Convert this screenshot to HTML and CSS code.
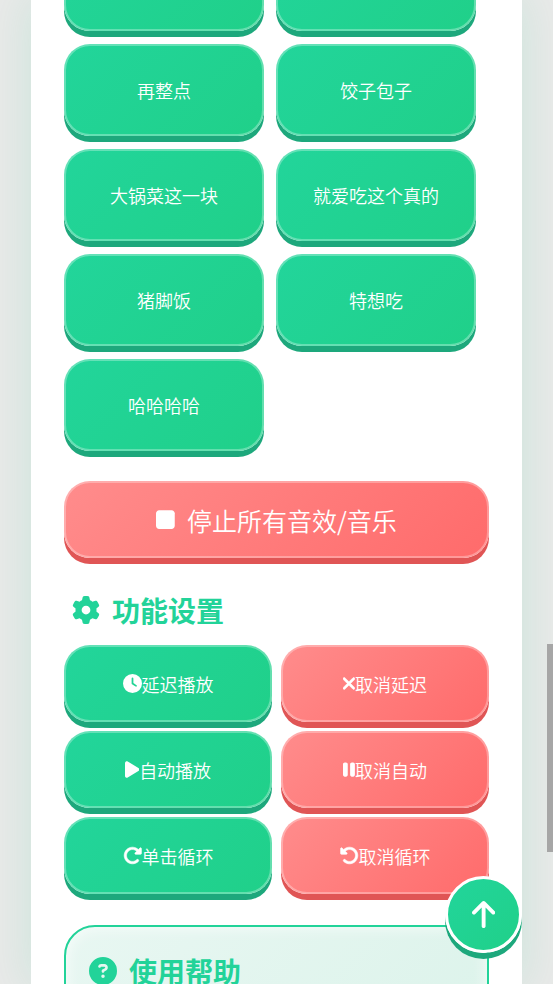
FILE: index.html
```html
<!DOCTYPE html>
<html lang="zh-CN">
<head>
<meta charset="utf-8">
<meta name="viewport" content="width=device-width, initial-scale=1">
<title>音效</title>
<link rel="stylesheet" href="styles.css">
</head>
<body>
<main class="card">
  <section class="sounds">
    <button class="btn sound" aria-label="音效"></button>
    <button class="btn sound" aria-label="音效"></button>
    <button class="btn sound">再整点</button>
    <button class="btn sound">饺子包子</button>
    <button class="btn sound">大锅菜这一块</button>
    <button class="btn sound">就爱吃这个真的</button>
    <button class="btn sound">猪脚饭</button>
    <button class="btn sound">特想吃</button>
    <button class="btn sound">哈哈哈哈</button>
  </section>

  <button class="btn red stop">
    <svg class="icon" viewBox="0 0 384 512"><path d="M0 128C0 92.700 28.700 64 64 64H320c35.300 0 64 28.700 64 64V384c0 35.300-28.700 64-64 64H64c-35.300 0-64-28.700-64-64V128z"/></svg>
    停止所有音效/音乐
  </button>

  <h2 class="heading settings-heading">
    <svg class="icon" viewBox="0 0 512 512"><path d="M495.9 166.6c3.2 8.7 .5 18.4-6.4 24.6l-43.3 39.4c1.1 8.3 1.7 16.8 1.7 25.4s-.6 17.1-1.7 25.4l43.3 39.4c6.9 6.200 9.600 15.900 6.400 24.600c-4.400 11.900-9.700 23.300-15.800 34.300l-4.700 8.100c-6.600 11-14 21.400-22.100 31.200c-5.900 7.200-15.700 9.600-24.500 6.800l-55.700-17.700c-13.400 10.300-28.200 18.900-44 25.400l-12.500 57.100c-2 9.100-9 16.300-18.200 17.800c-13.800 2.300-28 3.500-42.500 3.500s-28.700-1.200-42.500-3.500c-9.200-1.500-16.200-8.700-18.200-17.800l-12.500-57.100c-15.800-6.500-30.600-15.100-44-25.400L83.100 425.900c-8.800 2.800-18.600 .3-24.500-6.800c-8.100-9.800-15.500-20.200-22.100-31.200l-4.700-8.100c-6.100-11-11.400-22.400-15.800-34.300c-3.200-8.700-.5-18.400 6.400-24.600l43.300-39.400C64.600 273.100 64 264.600 64 256s.6-17.100 1.700-25.400L22.400 191.200c-6.900-6.200-9.600-15.900-6.400-24.600c4.400-11.900 9.700-23.300 15.800-34.300l4.700-8.100c6.600-11 14-21.400 22.100-31.200c5.900-7.200 15.700-9.600 24.500-6.800l55.700 17.700c13.400-10.300 28.200-18.900 44-25.400l12.500-57.100c2-9.100 9-16.300 18.200-17.800C227.300 1.200 241.500 0 256 0s28.700 1.200 42.500 3.500c9.200 1.500 16.200 8.700 18.200 17.800l12.500 57.100c15.800 6.500 30.600 15.100 44 25.400l55.700-17.700c8.800-2.800 18.600-.3 24.500 6.800c8.100 9.800 15.500 20.200 22.100 31.200l4.700 8.100c6.100 11 11.400 22.400 15.800 34.300zM256 336a80 80 0 1 0 0-160 80 80 0 1 0 0 160z"/></svg>
    功能设置
  </h2>

  <section class="settings">
    <button class="btn"><svg class="icon" viewBox="0 0 512 512"><path d="M256 0a256 256 0 1 1 0 512A256 256 0 1 1 256 0zM232 120V256c0 8 4 15.500 10.700 20l96 64c11 7.400 25.900 4.400 33.300-6.700s4.400-25.900-6.700-33.300L280 243.200V120c0-13.300-10.700-24-24-24s-24 10.700-24 24z"/></svg>延迟播放</button>
    <button class="btn red"><svg class="icon bold" viewBox="32 0 320 512"><path d="M342.6 150.6c12.5-12.5 12.5-32.8 0-45.3s-32.8-12.5-45.3 0L192 210.7 86.6 105.4c-12.5-12.5-32.8-12.5-45.3 0s-12.5 32.8 0 45.3L146.7 256 41.4 361.4c-12.5 12.5-12.5 32.8 0 45.3s32.8 12.5 45.3 0L192 301.3 297.4 406.6c12.5 12.5 32.8 12.5 45.3 0s12.5-32.8 0-45.3L237.3 256 342.6 150.6z"/></svg>取消延迟</button>
    <button class="btn"><svg class="icon" viewBox="0 0 384 512"><path d="M73 39c-14.8-9.1-33.4-9.4-48.5-.9S0 62.6 0 80V432c0 17.4 9.4 33.4 24.5 41.9s33.7 8.1 48.5-.9L361 297c14.3-8.7 23-24.2 23-41s-8.7-32.2-23-41L73 39z"/></svg>自动播放</button>
    <button class="btn red"><svg class="icon" viewBox="0 0 320 512"><path d="M48 64C21.5 64 0 85.5 0 112V400c0 26.5 21.5 48 48 48H80c26.5 0 48-21.5 48-48V112c0-26.5-21.5-48-48-48H48zm192 0c-26.5 0-48 21.5-48 48V400c0 26.5 21.5 48 48 48h32c26.5 0 48-21.5 48-48V112c0-26.5-21.5-48-48-48H240z"/></svg>取消自动</button>
    <button class="btn"><svg class="icon bold" viewBox="0 0 512 512"><path d="M463.5 224H472c13.3 0 24-10.7 24-24V72c0-9.7-5.8-18.5-14.8-22.2s-19.3-1.7-26.2 5.2L413.4 96.6c-87.6-86.5-228.7-86.2-315.8 1c-87.5 87.5-87.5 229.3 0 316.8s229.3 87.5 316.8 0c12.5-12.5 12.5-32.8 0-45.3s-32.8-12.5-45.3 0c-62.5 62.5-163.8 62.5-226.3 0s-62.5-163.8 0-226.3c62.2-62.2 162.7-62.5 225.3-1L327 183c-6.9 6.9-8.9 17.2-5.2 26.2s12.5 14.8 22.2 14.8H463.5z"/></svg>单击循环</button>
    <button class="btn red"><svg class="icon bold" viewBox="0 0 512 512"><path d="M48.5 224H40c-13.3 0-24-10.7-24-24V72c0-9.7 5.8-18.5 14.8-22.2s19.3-1.7 26.2 5.2L98.6 96.6c87.6-86.5 228.7-86.2 315.8 1c87.5 87.5 87.5 229.3 0 316.8s-229.3 87.5-316.8 0c-12.5-12.5-12.5-32.8 0-45.3s32.8-12.5 45.3 0c62.5 62.5 163.8 62.5 226.3 0s62.5-163.8 0-226.3c-62.2-62.2-162.7-62.5-225.3-1L185 183c6.9 6.9 8.9 17.2 5.2 26.2s-12.5 14.8-22.2 14.8H48.5z"/></svg>取消循环</button>
  </section>

  <section class="help">
    <h2 class="heading">
      <svg class="icon" viewBox="0 0 512 512"><path d="M256 512A256 256 0 1 0 256 0a256 256 0 1 0 0 512zM169.8 165.3c7.9-22.3 29.1-37.3 52.8-37.3h58.3c34.9 0 63.1 28.3 63.1 63.1c0 22.6-12.1 43.5-31.7 54.8L280 264.4c-.2 13-10.9 23.6-24 23.6c-13.3 0-24-10.7-24-24V250.5c0-8.6 4.6-16.5 12.1-20.8l44.3-25.4c4.7-2.7 7.6-7.7 7.6-13.1c0-8.4-6.8-15.1-15.1-15.1H222.6c-3.4 0-6.4 2.1-7.5 5.3l-.4 1.2c-4.4 12.5-18.2 19-30.6 14.6s-19-18.2-14.6-30.6l.4-1.2zM224 352a32 32 0 1 1 64 0 32 32 0 1 1 -64 0z"/></svg>
      使用帮助
    </h2>
  </section>
</main>

<button class="to-top" aria-label="返回顶部">
  <svg class="icon" viewBox="0 0 384 512"><path d="M214.6 41.4c-12.5-12.5-32.8-12.5-45.3 0l-160 160c-12.5 12.5-12.5 32.8 0 45.3s32.8 12.5 45.3 0L160 141.2V448c0 17.7 14.3 32 32 32s32-14.3 32-32V141.2L329.4 246.6c12.5 12.5 32.8 12.5 45.3 0s12.5-32.8 0-45.3l-160-160z"/></svg>
</button>
<div class="scroll-thumb" aria-hidden="true"></div>
</body>
</html>
```
FILE: styles.css
```css
* {
  box-sizing: border-box;
}

body {
  margin: 0;
  height: 100vh;
  overflow: hidden;
  background: #e8e9e8;
  font-family: "Noto Sans CJK SC", sans-serif;
  color: #fff;
}

.card {
  height: 100vh;
  overflow: hidden;
  margin: 0 31px;
  padding: 0 33px;
  background: #fff;
  box-shadow: 0 0 40px rgba(32, 210, 145, 0.15);
}

.icon {
  height: 1em;
  flex: none;
  fill: currentColor;
}

.btn {
  display: flex;
  align-items: center;
  justify-content: center;
  min-height: 77px;
  padding: 0;
  border: 2px solid rgba(255, 255, 255, 0.3);
  border-radius: 26px;
  background: linear-gradient(135deg, #22d59b, #20d089) border-box;
  box-shadow: 0 6px 0 #1da87c;
  color: inherit;
  font-family: inherit;
  font-size: 18px;
  font-weight: 350;
  line-height: 28px;
}

.red {
  background: linear-gradient(135deg, #ff8c8c, #ff6b6b) border-box;
  box-shadow: 0 6px 0 #e05555;
}

/* Scrolled so that the first row is partly above the window */
.sounds {
  display: grid;
  grid-template-columns: 1fr 1fr;
  gap: 13px 12px;
  margin-top: -61px;
  padding-right: 13px;
}

.sound {
  min-height: 92px;
}

.stop {
  width: 100%;
  margin-top: 30px;
  gap: 12px;
  font-size: 25px;
}

.heading {
  display: flex;
  align-items: center;
  gap: 12px;
  margin: 0;
  color: #22d399;
  font-size: 28px;
  font-weight: 700;
  line-height: 38px;
}

.settings-heading {
  margin: 33px 0 16px;
  padding-left: 8px;
}

.settings {
  display: grid;
  grid-template-columns: 1fr 1fr;
  gap: 9px;
}

.settings .icon {
  height: 19px;
}

.bold {
  stroke: currentColor;
  stroke-width: 16px;
}

.help {
  height: 300px;
  margin-top: 31px;
  padding: 25px 23px;
  border: 2px solid #22d399;
  border-radius: 31px;
  background: linear-gradient(135deg, #e8f7f2, #d8f2e8);
  box-shadow: inset 0 0 16px rgba(255, 255, 255, 0.8);
}

.to-top {
  position: fixed;
  right: 31px;
  bottom: 31px;
  display: flex;
  align-items: center;
  justify-content: center;
  width: 77px;
  height: 77px;
  padding: 0;
  border: 3px solid #fff;
  border-radius: 50%;
  background: linear-gradient(135deg, #22d59b, #20d089);
  box-shadow: 0 6px 0 #1da87c;
  color: #fff;
  font-size: 31px;
}

.scroll-thumb {
  position: fixed;
  top: 644px;
  right: 0;
  width: 6px;
  height: 208px;
  background: #a6a6a6;
}
```
